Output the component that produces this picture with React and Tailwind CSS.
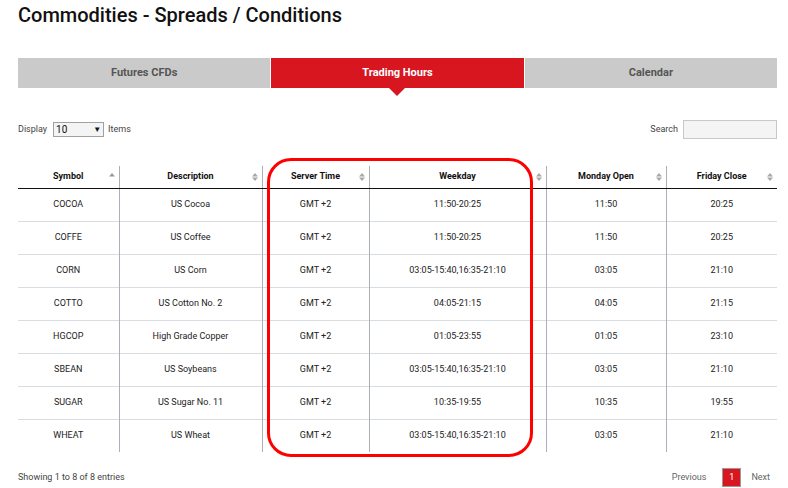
import React from 'react';

const rows = [
    { symbol: 'COCOA', desc: 'US Cocoa', server: 'GMT +2', weekday: '11:50-20:25', open: '11:50', close: '20:25' },
    { symbol: 'COFFE', desc: 'US Coffee', server: 'GMT +2', weekday: '11:50-20:25', open: '11:50', close: '20:25' },
    { symbol: 'CORN', desc: 'US Corn', server: 'GMT +2', weekday: '03:05-15:40,16:35-21:10', open: '03:05', close: '21:10' },
    { symbol: 'COTTO', desc: 'US Cotton No. 2', server: 'GMT +2', weekday: '04:05-21:15', open: '04:05', close: '21:15' },
    { symbol: 'HGCOP', desc: 'High Grade Copper', server: 'GMT +2', weekday: '01:05-23:55', open: '01:05', close: '23:10' },
    { symbol: 'SBEAN', desc: 'US Soybeans', server: 'GMT +2', weekday: '03:05-15:40,16:35-21:10', open: '03:05', close: '21:10' },
    { symbol: 'SUGAR', desc: 'US Sugar No. 11', server: 'GMT +2', weekday: '10:35-19:55', open: '10:35', close: '19:55' },
    { symbol: 'WHEAT', desc: 'US Wheat', server: 'GMT +2', weekday: '03:05-15:40,16:35-21:10', open: '03:05', close: '21:10' },
];

const columns = [
    { label: 'Symbol', width: 'w-[101px]', sort: 'asc' },
    { label: 'Description', width: 'w-[143px]' },
    { label: 'Server Time', width: 'w-[107px]' },
    { label: 'Weekday', width: 'w-[177px]' },
    { label: 'Monday Open', width: 'w-[120px]' },
    { label: 'Friday Close', width: 'w-[111px]' },
];

const SortIcon = ({ dir }) => (
    <svg width="6" height="9" viewBox="0 0 6 9" className="absolute right-[4px] top-1/2 -translate-y-1/2">
        <path d="M0 4 L3 0.5 L6 4 Z" fill={dir === 'asc' ? '#9a9a9a' : '#a8a8a8'} />
        {dir !== 'asc' && <path d="M0 5 L3 8.5 L6 5 Z" fill="#a8a8a8" />}
    </svg>
);

const tabs = ['Futures CFDs', 'Trading Hours', 'Calendar'];

const App = () => {
    return (
        <div className="w-[788px] h-[488px] bg-white pl-[18px] pr-[11px] overflow-hidden" style={{ fontFamily: 'Roboto, "Liberation Sans", sans-serif' }}>
            <h1 className="text-[20px] leading-[28px] pt-[1px] font-medium text-[#111]">Commodities - Spreads / Conditions</h1>

            {/* tabs */}
            <div className="mt-[29px] flex gap-[1px] h-[30px]">
                {tabs.map((t) => {
                    const active = t === 'Trading Hours';
                    return (
                        <div
                            key={t}
                            className={`relative flex-1 flex items-center justify-center text-[11px] font-bold ${active ? 'bg-[#d7161f] text-white' : 'bg-[#cacaca] text-[#555]'}`}
                        >
                            {t}
                            {active && (
                                <div className="absolute left-1/2 -translate-x-1/2 top-full w-0 h-0 border-l-[8px] border-r-[8px] border-t-[8px] border-l-transparent border-r-transparent border-t-[#d7161f]" />
                            )}
                        </div>
                    );
                })}
            </div>

            {/* controls */}
            <div className="mt-[32px] flex items-center justify-between h-[19px] text-[9px] text-[#444]">
                <div className="flex items-center gap-[6px]">
                    <span>Display</span>
                    <div className="w-[51px] h-[15px] border border-[#a0a0a0] bg-[#f4f4f4] flex items-center justify-between px-[2px] text-[10px] text-[#111]">
                        <span>10</span>
                        <span className="text-[8px]">▼</span>
                    </div>
                    <span className="-ml-[2px]">Items</span>
                </div>
                <div className="flex items-center gap-[5px]">
                    <span>Search</span>
                    <div className="w-[94px] h-[19px] border border-[#c8c8c8] bg-[#f4f4f4]" />
                </div>
            </div>

            {/* table */}
            <div className="relative mt-[27px]">
                <table className="table-fixed border-collapse w-[759px] text-[9px] text-[#222]">
                    <thead>
                        <tr className="h-[22px]">
                            {columns.map((c, i) => (
                                <th
                                    key={c.label}
                                    className={`${c.width} relative font-bold text-[#111] border-b border-b-[#111] ${i > 0 ? 'border-l border-l-[#a9b0b8]' : ''}`}
                                >
                                    {c.label}
                                    <SortIcon dir={c.sort} />
                                </th>
                            ))}
                        </tr>
                    </thead>
                    <tbody>
                        {rows.map((r, idx) => (
                            <tr key={r.symbol} className={`h-[33px] ${idx < rows.length - 1 ? 'border-b border-b-[#d9dde2]' : ''}`}>
                                {[r.symbol, r.desc, r.server, r.weekday, r.open, r.close].map((v, i) => (
                                    <td key={i} className={`text-center ${i > 0 ? 'border-l border-l-[#a9b0b8]' : ''}`}>
                                        {v}
                                    </td>
                                ))}
                            </tr>
                        ))}
                    </tbody>
                </table>

                {/* highlight annotation */}
                <div className="absolute left-[249px] top-[-8px] w-[266px] h-[299px] border-[3px] border-[#ff0000] rounded-[24px] pointer-events-none" />
            </div>

            {/* footer */}
            <div className="mt-[16px] flex items-center justify-between text-[9px] text-[#444]">
                <span>Showing 1 to 8 of 8 entries</span>
                <div className="flex items-center mr-[7px]">
                    <span className="text-[#666]">Previous</span>
                    <span className="ml-[16px] w-[19px] h-[19px] bg-[#d7161f] border border-[#999] text-white flex items-center justify-center">1</span>
                    <span className="ml-[10px] text-[#666]">Next</span>
                </div>
            </div>
        </div>
    );
};

export default App;
